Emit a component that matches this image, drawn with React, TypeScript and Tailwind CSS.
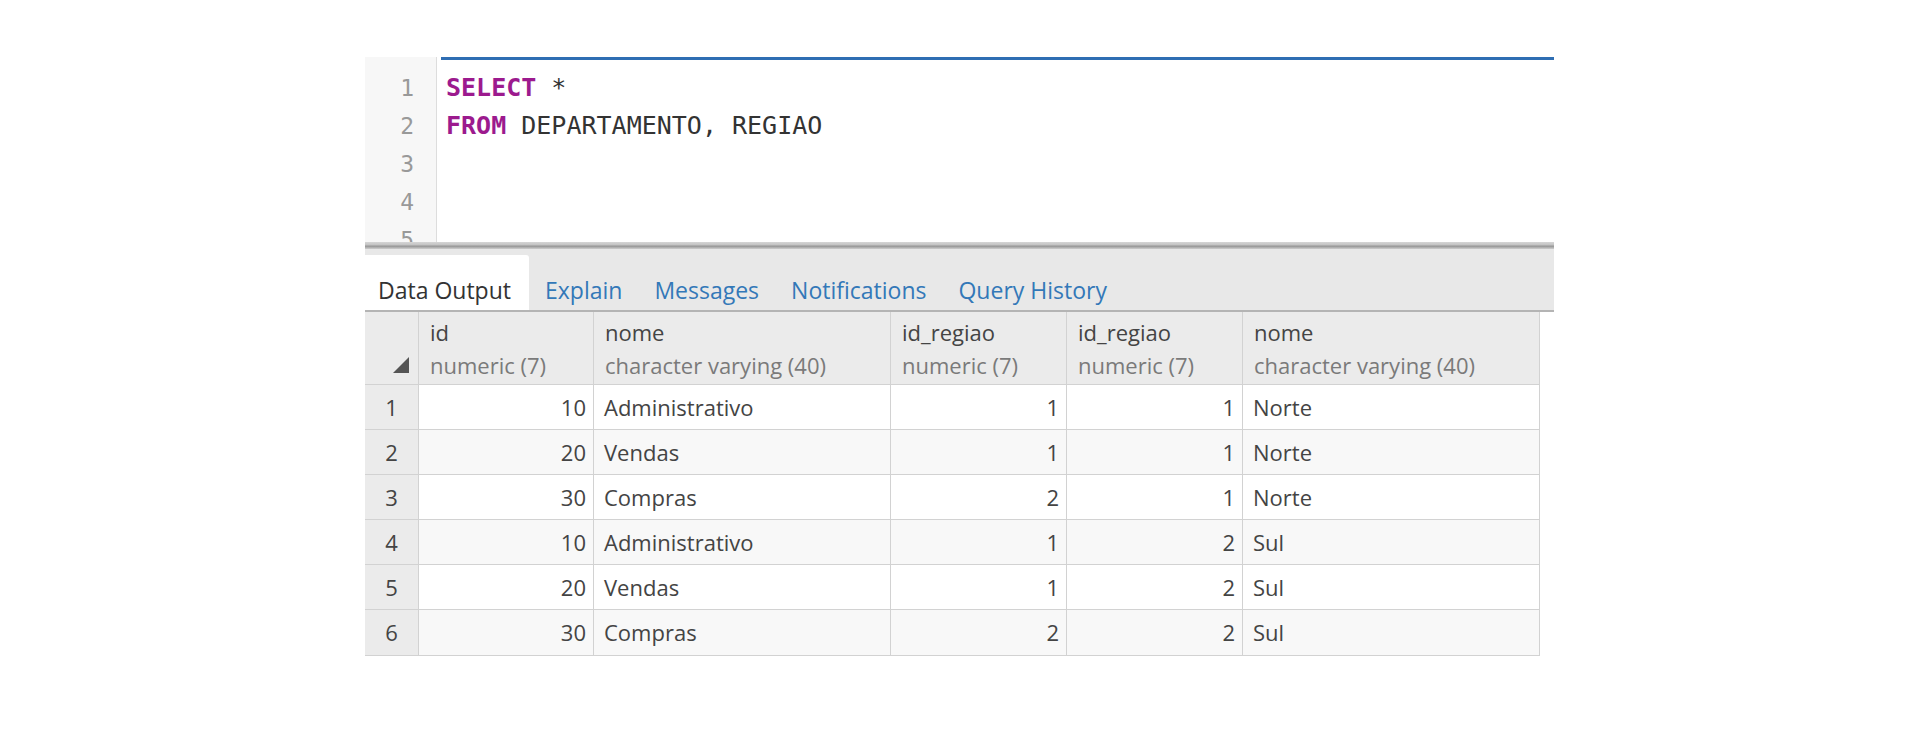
const mono = { fontFamily: '"DejaVu Sans Mono", "Liberation Mono", monospace' };

const columns = [
  { name: 'id', type: 'numeric (7)', width: 'w-[175px]', numeric: true },
  { name: 'nome', type: 'character varying (40)', width: 'w-[297px]', numeric: false },
  { name: 'id_regiao', type: 'numeric (7)', width: 'w-[176px]', numeric: true },
  { name: 'id_regiao', type: 'numeric (7)', width: 'w-[176px]', numeric: true },
  { name: 'nome', type: 'character varying (40)', width: 'w-[297px]', numeric: false },
];

const rows = [
  ['10', 'Administrativo', '1', '1', 'Norte'],
  ['20', 'Vendas', '1', '1', 'Norte'],
  ['30', 'Compras', '2', '1', 'Norte'],
  ['10', 'Administrativo', '1', '2', 'Sul'],
  ['20', 'Vendas', '1', '2', 'Sul'],
  ['30', 'Compras', '2', '2', 'Sul'],
];

const tabs = ['Data Output', 'Explain', 'Messages', 'Notifications', 'Query History'];

function Editor() {
  return (
    <div className="flex h-[185px] overflow-hidden bg-white">
      <div className="w-[72px] shrink-0 bg-[#f7f7f7] border-r border-[#dddddd] pt-[12px] text-[23px] text-[#999999]" style={mono}>
        {[1, 2, 3, 4, 5].map((n) => (
          <div key={n} className="h-[38px] leading-[38px] text-right pr-[22px]">
            {n}
          </div>
        ))}
      </div>
      <div className="flex-1 flex flex-col">
        <div className="ml-[4px] h-[3px] bg-[#2f6eb3]" />
        <div className="pt-[9px] pl-[9px] text-[25px] text-[#333333]" style={mono}>
          <div className="h-[38px] leading-[38px] whitespace-pre">
            <span className="font-bold text-[#9c1a8e]">SELECT</span> *
          </div>
          <div className="h-[38px] leading-[38px] whitespace-pre">
            <span className="font-bold text-[#9c1a8e]">FROM</span> DEPARTAMENTO, REGIAO
          </div>
        </div>
      </div>
    </div>
  );
}

function Tabs() {
  return (
    <div className="h-[63px] bg-[#e8e8e8] flex items-end border-b-2 border-[#b4b4b4]">
      {tabs.map((t, i) => (
        <div
          key={t}
          className={
            i === 0
              ? 'h-[55px] w-[164px] bg-white rounded-tr-[3px] pl-[13px] flex items-center pt-[16px] text-[#333333]'
              : 'h-[55px] px-[16px] flex items-center pt-[16px] text-[#3378b8]'
          }
        >
          {t}
        </div>
      ))}
    </div>
  );
}

function SortMark() {
  return (
    <svg width="16" height="16" viewBox="0 0 16 16" className="absolute left-[28px] top-[45px]">
      <polygon points="16,0 16,16 0,16" fill="#555555" />
    </svg>
  );
}

function Grid() {
  return (
    <div className="w-[1175px] border-r border-b border-[#d2d2d2] text-[22px]">
      <div className="flex h-[73px] bg-[#ebebeb] border-b border-[#d2d2d2]">
        <div className="relative w-[54px] shrink-0 border-r border-[#d2d2d2]">
          <SortMark />
        </div>
        {columns.map((c, i) => (
          <div
            key={i}
            className={`${c.width} shrink-0 border-r border-[#d2d2d2] last:border-r-0 pl-[11px] pt-[2px] flex flex-col justify-center leading-[33px]`}
          >
            <div className="text-[#444444]">{c.name}</div>
            <div className="text-[#7a7a7a]">{c.type}</div>
          </div>
        ))}
      </div>
      {rows.map((r, ri) => (
        <div key={ri} className={`flex h-[45px] border-b border-[#d2d2d2] last:border-b-0 ${ri % 2 === 1 ? 'bg-[#f8f8f8]' : 'bg-white'}`}>
          <div className="w-[54px] shrink-0 bg-[#ebebeb] border-r border-[#d2d2d2] flex items-center justify-center text-[#444444]">
            {ri + 1}
          </div>
          {r.map((v, ci) => (
            <div
              key={ci}
              className={`${columns[ci].width} shrink-0 border-r border-[#d2d2d2] last:border-r-0 flex items-center text-[#444444] ${
                columns[ci].numeric ? 'justify-end pr-[7px]' : 'pl-[10px]'
              }`}
            >
              {v}
            </div>
          ))}
        </div>
      ))}
    </div>
  );
}

export default function App() {
  return (
    <div className="w-[1920px] h-[734px] bg-white overflow-hidden" style={{ fontFamily: '"Open Sans", "Noto Sans", sans-serif' }}>
      <div className="ml-[365px] mt-[57px] w-[1189px]">
        <Editor />
        <div className="h-[7px] bg-[linear-gradient(to_bottom,#d6d6d6,#c4c4c4_40%,#969696_60%,#cfcfcf)]" />
        <div className="text-[23px]">
          <Tabs />
        </div>
        <Grid />
      </div>
    </div>
  );
}
